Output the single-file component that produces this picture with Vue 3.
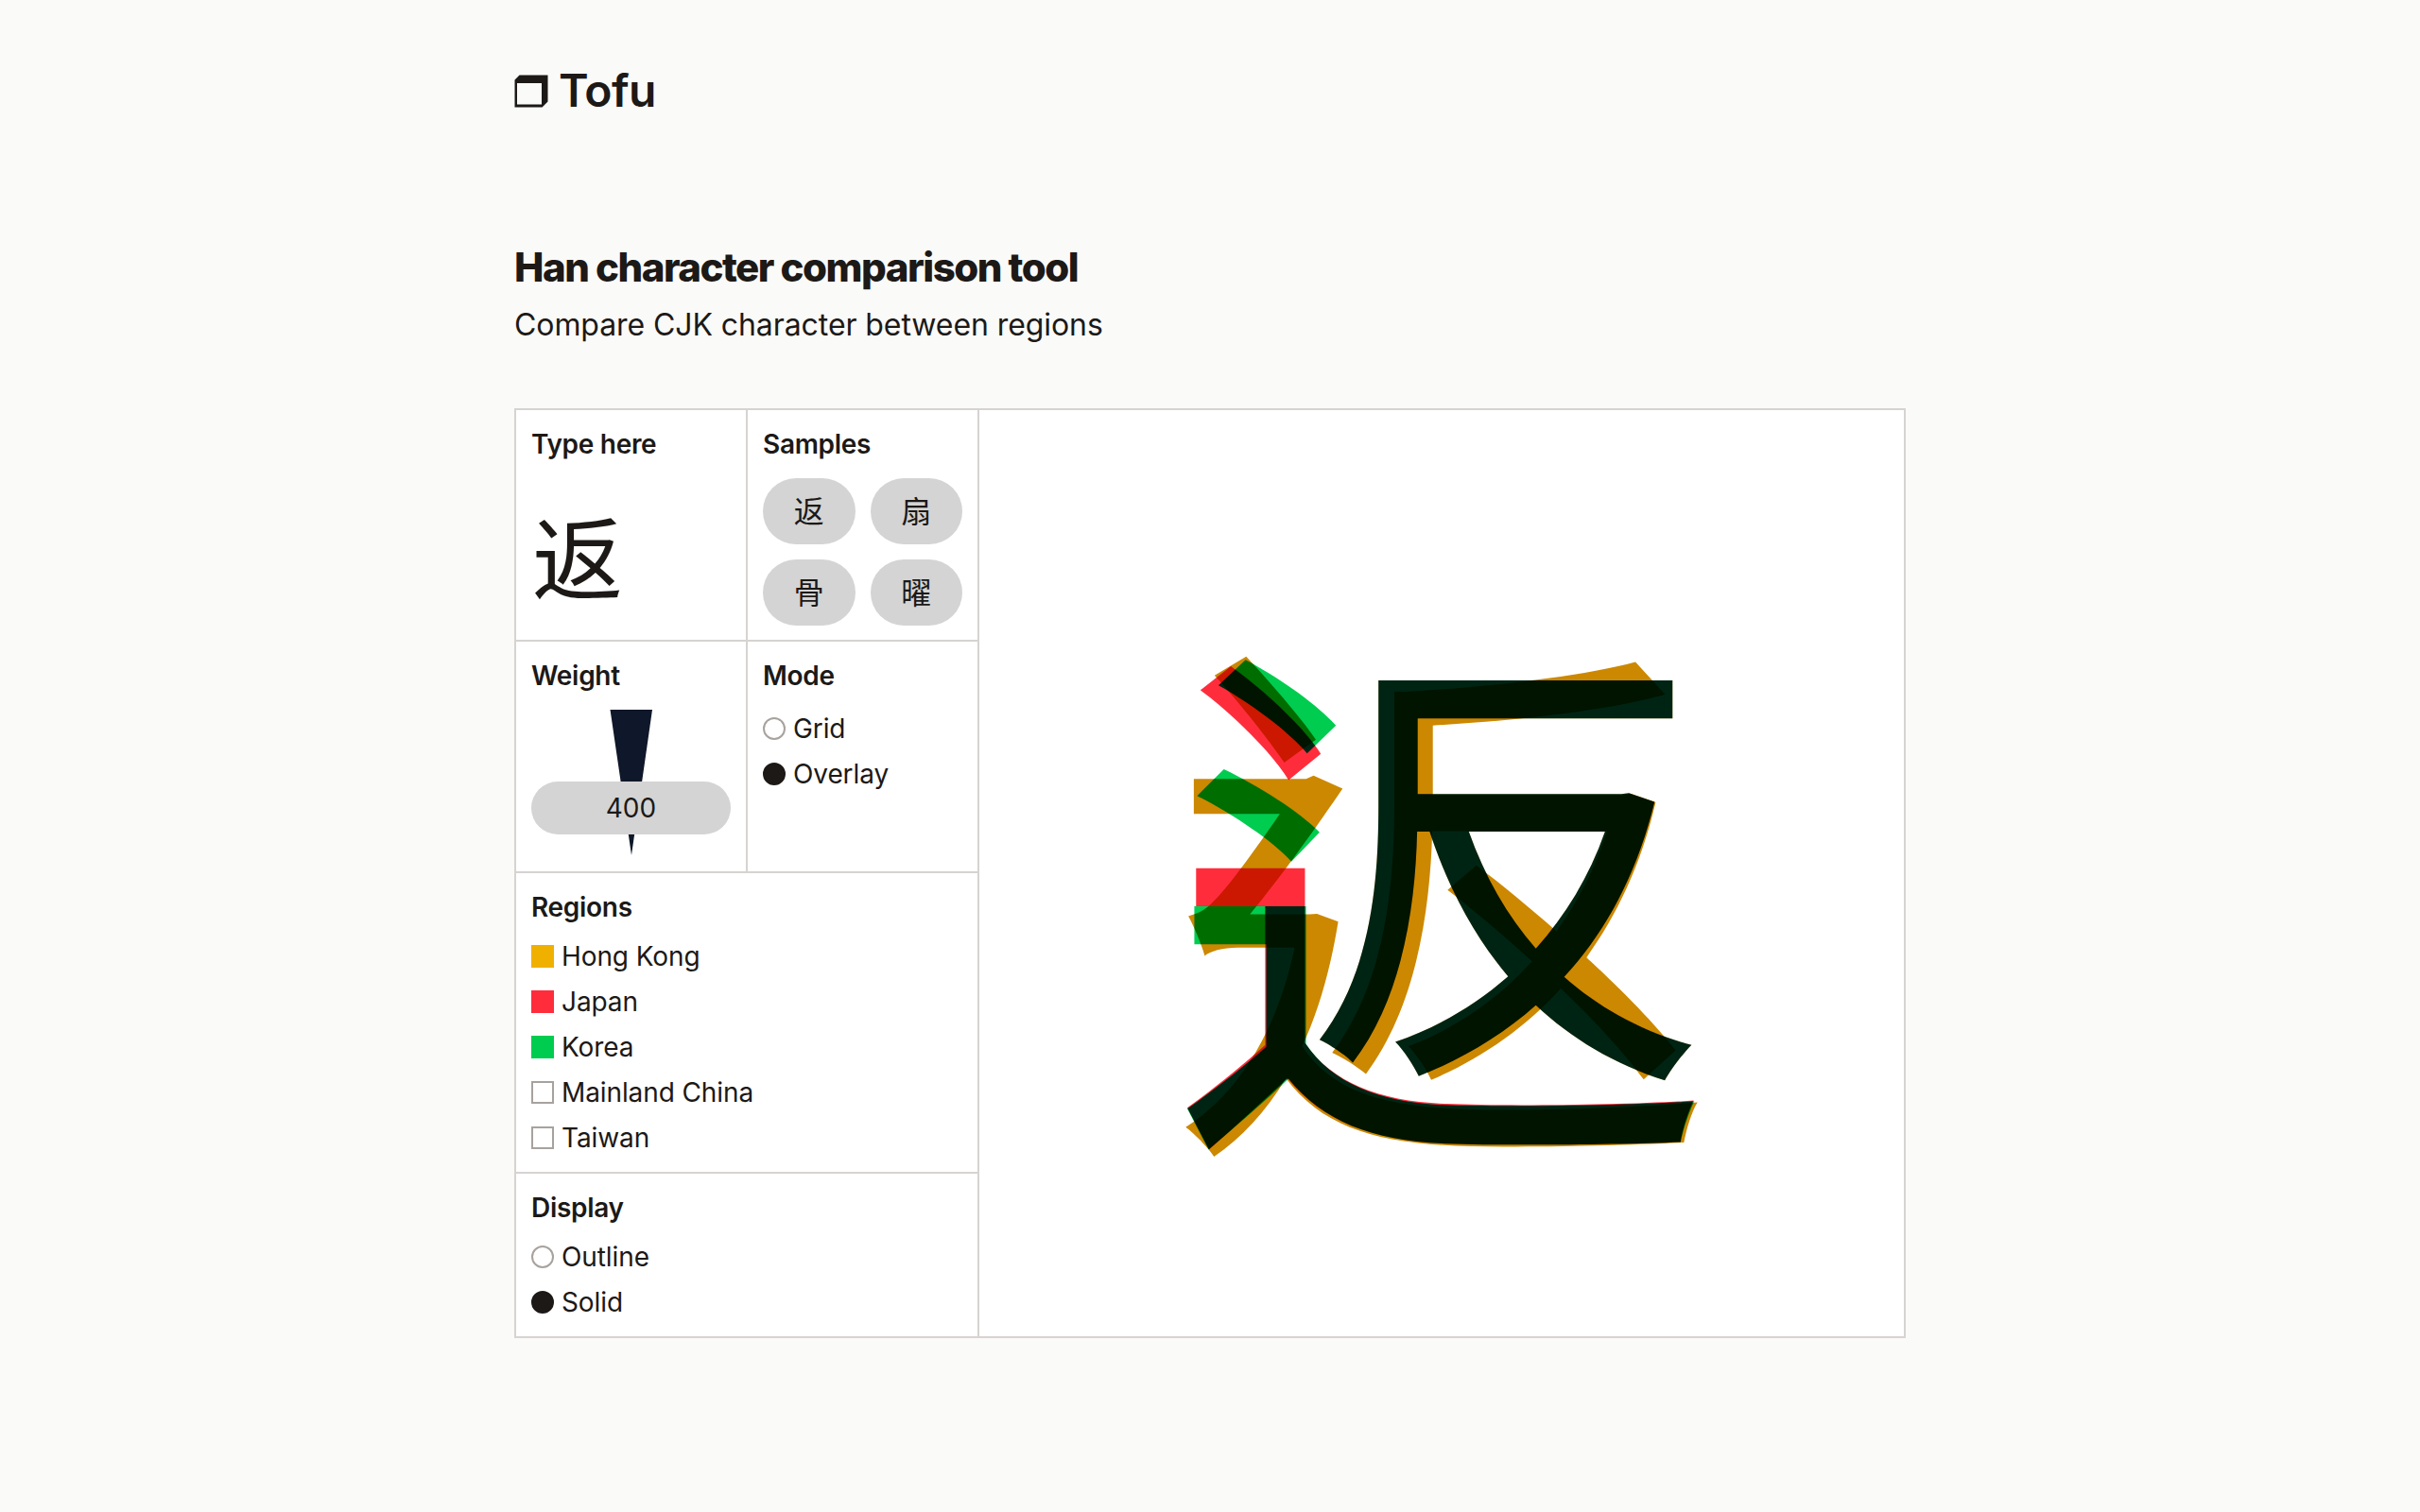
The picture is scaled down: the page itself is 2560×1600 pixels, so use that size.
<script setup>
const samples = ['返', '扇', '骨', '曜']
const regions = [
  { name: 'Hong Kong', color: '#f0b000' },
  { name: 'Japan', color: '#ff2d3c' },
  { name: 'Korea', color: '#00cc50' },
  { name: 'Mainland China', color: '' },
  { name: 'Taiwan', color: '' }
]
</script>

<template>
  <div class="page">
    <header class="logo">
      <svg class="cube" width="36" height="35" viewBox="0 0 36 35" aria-hidden="true">
        <path fill-rule="evenodd" fill="#1c1917" d="M0.5 5.5 5.5 0.5H35.5V28.5L29.5 34.5H0.5ZM3 9V31.5H29V9Z" />
      </svg>
      <span class="logo-text">Tofu</span>
    </header>

    <h1 class="title">Han character comparison tool</h1>
    <p class="subtitle">Compare CJK character between regions</p>

    <section class="board">
      <div class="controls">
        <div class="cell">
          <div class="label">Type here</div>
          <div class="input-char" lang="zh-CN">返</div>
        </div>
        <div class="cell edge">
          <div class="label">Samples</div>
          <div class="samples">
            <button v-for="s in samples" :key="s" class="pill" lang="zh-CN">{{ s }}</button>
          </div>
        </div>
        <div class="cell">
          <div class="label">Weight</div>
          <div class="weight">
            <svg class="wedge" width="46" height="154" viewBox="0 0 46 154" aria-hidden="true">
              <polygon points="0.5,0 45,0 23,154" fill="#0f172a" />
            </svg>
            <div class="weight-value">400</div>
          </div>
        </div>
        <div class="cell edge">
          <div class="label">Mode</div>
          <div class="options mode">
            <div class="option"><span class="radio"></span>Grid</div>
            <div class="option"><span class="radio on"></span>Overlay</div>
          </div>
        </div>
        <div class="cell wide">
          <div class="label">Regions</div>
          <div class="options">
            <div v-for="r in regions" :key="r.name" class="option">
              <span v-if="r.color" class="swatch" :style="{ background: r.color }"></span>
              <span v-else class="swatch empty"></span>
              {{ r.name }}
            </div>
          </div>
        </div>
        <div class="cell wide last">
          <div class="label">Display</div>
          <div class="options">
            <div class="option"><span class="radio"></span>Outline</div>
            <div class="option"><span class="radio on"></span>Solid</div>
          </div>
        </div>
      </div>

      <div class="canvas">
        <div class="overlay">
          <span class="glyph hk" lang="zh-HK">返</span>
          <span class="glyph jp" lang="ja">返</span>
          <span class="glyph kr" lang="ko">返</span>
        </div>
      </div>
    </section>
  </div>
</template>

<style>
body {
  background: #fafaf9;
}
</style>

<style scoped>
.page {
  width: 1472px;
  margin: 0 auto;
  color: #1c1917;
  font-family: Inter, "Noto Sans CJK SC", sans-serif;
}
.logo {
  display: flex;
  align-items: center;
  gap: 11px;
  padding-top: 64px;
  height: 64px;
}
.cube {
  flex: none;
}
.logo-text {
  font-size: 48px;
  font-weight: 600;
  letter-spacing: -0.6px;
  line-height: 64px;
}
.title {
  margin: 127px 0 0;
  font-size: 42px;
  line-height: 56px;
  font-weight: 800;
  letter-spacing: -1.5px;
}
.subtitle {
  margin: 9px 0 0;
  font-size: 32px;
  line-height: 48px;
  font-weight: 400;
  letter-spacing: -0.08px;
}
.board {
  display: flex;
  margin-top: 64px;
  border: 2px solid #d6d3d1;
  background: #fff;
}
.controls {
  flex: none;
  box-sizing: border-box;
  width: 490px;
  display: grid;
  grid-template-columns: 245px 243px;
  grid-template-rows: 245px 245px 318px 172px;
  border-right: 2px solid #d6d3d1;
}
.cell {
  box-sizing: border-box;
  padding: 16px 16px 0;
  border-right: 2px solid #d6d3d1;
  border-bottom: 2px solid #d6d3d1;
}
.cell.edge,
.cell.wide {
  border-right: 0;
}
.cell.wide {
  grid-column: 1 / 3;
}
.cell.last {
  border-bottom: 0;
}
.label {
  font-size: 28px;
  line-height: 40px;
  font-weight: 600;
  margin-bottom: 16px;
  letter-spacing: -0.3px;
}
.input-char {
  font-family: "Noto Sans CJK SC", sans-serif;
  font-size: 96px;
  line-height: 112px;
  margin-top: 40px;
  margin-left: 1px;
  height: 112px;
}
.samples {
  display: grid;
  grid-template-columns: 1fr 1fr;
  column-gap: 16px;
  row-gap: 16.5px;
}
.pill {
  height: 69.5px;
  padding: 0 0 4px;
  border: 0;
  border-radius: 35px;
  background: #d4d4d4;
  color: #1c1917;
  font-family: "Noto Sans CJK SC", sans-serif;
  font-size: 32px;
}
.weight {
  display: grid;
  justify-items: center;
}
.wedge,
.weight-value {
  grid-area: 1 / 1;
}
.weight-value {
  width: 100%;
  height: 56px;
  margin-top: 76px;
  border-radius: 28px;
  background: #d4d4d4;
  text-align: center;
  font-size: 28px;
  line-height: 56px;
  z-index: 1;
}
.options {
  display: flex;
  flex-direction: column;
  gap: 16px;
  font-size: 28px;
  letter-spacing: -0.1px;
}
.options.mode {
  padding-top: 4px;
}
.option {
  display: flex;
  align-items: center;
  gap: 8px;
  height: 32px;
  line-height: 32px;
}
.radio,
.swatch {
  flex: none;
  box-sizing: border-box;
  width: 24px;
  height: 24px;
}
.radio {
  border: 2px solid #a8a29e;
  border-radius: 50%;
  background: #fff;
}
.radio.on {
  border-color: #1c1917;
  background: #1c1917;
}
.swatch.empty {
  border: 2px solid #a8a29e;
}
.canvas {
  flex: 1;
  display: grid;
  place-items: center;
  isolation: isolate;
}
.overlay {
  display: grid;
  place-items: center;
}
.glyph {
  grid-area: 1 / 1;
  font-size: 576px;
  line-height: 1;
  mix-blend-mode: multiply;
}
.hk {
  font-family: "Noto Sans CJK TC", sans-serif;
  color: #cc8800;
}
.jp {
  font-family: "Noto Sans CJK JP", sans-serif;
  color: #ff2d3c;
}
.kr {
  font-family: "Noto Sans CJK KR", sans-serif;
  color: #00cc50;
}
</style>
